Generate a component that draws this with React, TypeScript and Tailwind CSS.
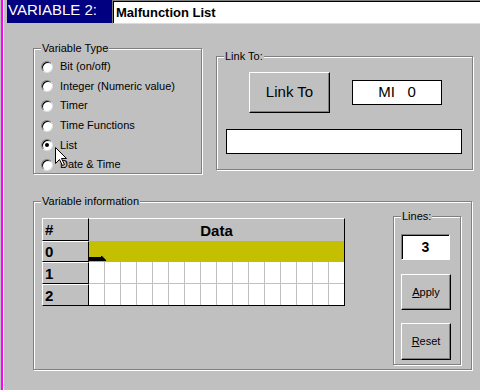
import React from "react";

const etched = "border border-[#808080] shadow-[inset_1px_1px_0_#fff,1px_1px_0_#fff]";
const raised =
  "bg-[#c0c0c0] border border-t-white border-l-white border-r-black border-b-black shadow-[inset_-1px_-1px_0_#808080]";

function Group({
  label,
  className,
  children,
}: {
  label: string;
  className: string;
  children?: React.ReactNode;
}) {
  return (
    <div className={`relative shrink-0 ${etched} ${className}`}>
      <div className="absolute top-[-7px] left-[7px] px-[1px] bg-[#c0c0c0] text-[11px] leading-[13px] text-black whitespace-nowrap">
        {label}
      </div>
      {children}
    </div>
  );
}

function Radio({ label, checked }: { label: string; checked?: boolean }) {
  return (
    <div className="flex items-center h-[19.6px] gap-[7px]">
      <div className="w-[12px] h-[12px] rounded-full bg-white border border-t-[#808080] border-l-[#808080] border-b-[#e0e0e0] border-r-[#e0e0e0] shadow-[inset_1px_1px_0_#000] flex items-center justify-center shrink-0">
        {checked && <div className="w-[4px] h-[4px] rounded-full bg-black" />}
      </div>
      <span className="text-[11px] leading-[13px] text-black whitespace-nowrap">{label}</span>
    </div>
  );
}

function DataRow({ bg, h, last, arrow }: { bg: string; h: string; last?: boolean; arrow?: boolean }) {
  const cells = Array.from({ length: 16 });
  return (
    <div className={`relative flex w-[256px] ${h} border-r border-black overflow-hidden ${last ? "border-b border-b-black" : ""} ${bg}`}>
      {cells.map((_, i) => (
        <div
          key={i}
          className={`w-[16px] shrink-0 h-full ${arrow ? "" : "border-r border-[#c0c0c0]"} ${!last && !arrow ? "border-b border-b-[#c0c0c0]" : ""}`}
        />
      ))}
      {arrow && (
        <svg className="absolute left-0 bottom-[1px]" width="17" height="5" viewBox="0 0 17 5">
          <polygon points="0,1 12,1 12,0 13,0 17,4 17,5 0,5" fill="#000" />
        </svg>
      )}
    </div>
  );
}

function NumCell({ n, h }: { n: string; h: string }) {
  return (
    <div
      className={`w-[47px] ${h} bg-[#c0c0c0] border-l border-t border-l-white border-t-white border-r border-r-black border-b border-b-black flex items-center pl-[2px] text-[15px] font-bold leading-none text-black`}
    >
      {n}
    </div>
  );
}

export default function App() {
  return (
    <div
      className="relative w-[480px] h-[390px] bg-[#c0c0c0] flex overflow-hidden"
      style={{ fontFamily: '"Liberation Sans", Arial, sans-serif' }}
    >
      <div className="w-px bg-[#c0c0c0] shrink-0" />
      <div className="w-[2px] bg-[#ff00ff] shrink-0" />
      <div className="w-px bg-white shrink-0" />
      <div className="flex-1 flex flex-col">
        {/* Title row */}
        <div className="flex h-[24px]">
          <div className="w-[3px] shrink-0" />
          <div className="w-[105px] h-[23px] bg-[#000080] text-white text-[15px] leading-[17px] pt-[1px] pl-[1px] whitespace-nowrap">
            VARIABLE 2:
          </div>
          <div className="flex-1 h-[24px] bg-white border-t border-l border-t-[#808080] border-l-[#808080] border-b border-b-[#dcdcdc] shadow-[inset_1px_1px_0_#000] pl-[3px] pt-[3px] text-[13px] leading-[17px] font-bold text-black whitespace-nowrap">
            Malfunction List
          </div>
        </div>

        {/* Row 2 */}
        <div className="flex items-start mt-[24px]">
          <Group label="Variable Type" className="ml-[29px] w-[169px] h-[126px]">
            <div className="flex flex-col pl-[7px] pt-[8px]">
              <Radio label="Bit (on/off)" />
              <Radio label="Integer (Numeric value)" />
              <Radio label="Timer" />
              <Radio label="Time Functions" />
              <Radio label="List" checked />
              <Radio label="Date & Time" />
            </div>
          </Group>
          <Group label="Link To:" className="ml-[14px] mt-[8px] w-[257px] h-[114px]">
            <div className="flex flex-col pl-[9px] pt-[15px]">
              <div className="flex items-center pl-[23px]">
                <div className={`w-[81px] h-[41px] ${raised} flex items-center justify-center text-[15px] text-black`}>
                  Link To
                </div>
                <div className="ml-[22px] w-[90px] h-[25px] bg-white border border-black flex items-center justify-center text-[15px] text-black whitespace-pre">
                  {"MI   0"}
                </div>
              </div>
              <div className="mt-[16px] w-[236px] h-[25px] bg-white border border-black" />
            </div>
          </Group>
        </div>

        {/* Row 3 */}
        <div className="flex mt-[27px]">
          <Group label="Variable information" className="ml-[29px] w-[439px] h-[169px]">
            <div className="flex items-start pl-[8px] pt-[14px]">
              {/* Grid */}
              <div className="flex flex-col mt-[2px]">
                <div className="flex h-[23px]">
                  <div className="w-[47px] h-[23px] bg-[#c0c0c0] border-l border-t border-l-white border-t-white border-r border-r-black border-b border-b-black flex items-center pl-[2px] text-[15px] font-bold leading-none text-black">
                    #
                  </div>
                  <div className="w-[256px] h-[23px] bg-[#c0c0c0] border-t border-t-white border-r border-r-black flex items-center justify-center text-[15px] font-bold leading-none text-black">
                    Data
                  </div>
                </div>
                <div className="flex">
                  <NumCell n="0" h="h-[21px]" />
                  <DataRow bg="bg-[#c4c000]" h="h-[21px]" arrow />
                </div>
                <div className="flex">
                  <NumCell n="1" h="h-[22px]" />
                  <DataRow bg="bg-white" h="h-[22px]" />
                </div>
                <div className="flex">
                  <NumCell n="2" h="h-[22px]" />
                  <DataRow bg="bg-white" h="h-[22px]" last />
                </div>
              </div>

              {/* Lines */}
              <Group label="Lines:" className="ml-[48px] w-[68px] h-[149px]">
                <div className="flex flex-col pl-[7px] pt-[17px]">
                  <div className="w-[49px] h-[26px] bg-white border border-t-[#808080] border-l-[#808080] border-b-white border-r-white shadow-[inset_1px_1px_0_#000] flex items-center justify-center text-[14px] font-bold text-black">
                    3
                  </div>
                  <div className={`mt-[14px] w-[50px] h-[36px] ${raised} flex items-center justify-center text-[11px] text-black`}>
                    <span>
                      <u>A</u>pply
                    </span>
                  </div>
                  <div className={`mt-[13px] w-[50px] h-[37px] ${raised} flex items-center justify-center text-[11px] text-black`}>
                    <span>
                      <u>R</u>eset
                    </span>
                  </div>
                </div>
              </Group>
            </div>
          </Group>
        </div>
      </div>

      {/* Mouse cursor */}
      <svg className="absolute left-[55px] top-[147px]" width="13" height="20" viewBox="0 0 13 20">
        <path d="M0.5 0.5 L0.5 16.5 L4.5 12.5 L7.5 18.5 L9.5 17.5 L6.5 11.5 L11.5 11.5 Z" fill="#fff" stroke="#000" strokeWidth="1" />
      </svg>
    </div>
  );
}
